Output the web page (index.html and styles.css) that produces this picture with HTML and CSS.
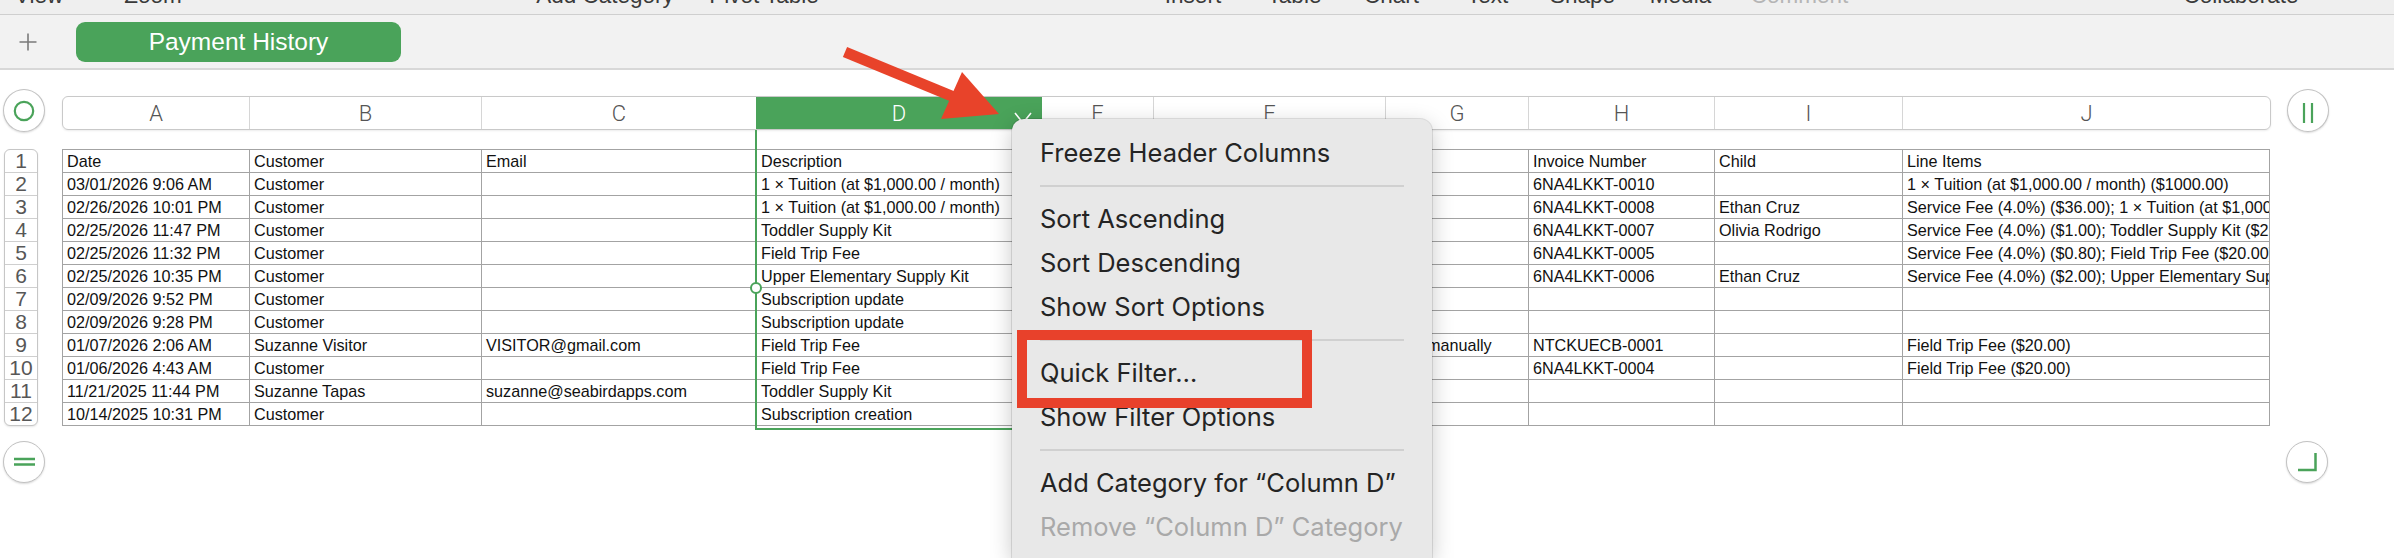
FILE: index.html
```html
<!DOCTYPE html>
<html>
<head>
<meta charset="utf-8">
<title>Payment History</title>
<link rel="stylesheet" href="styles.css">
</head>
<body>
<div class="toolbar">
  <span class="tl t1">View</span>
  <span class="tl t2">Zoom</span>
  <span class="tl t3">Add Category</span>
  <span class="tl t4">Pivot Table</span>
  <span class="tl t5">Insert</span>
  <span class="tl t6">Table</span>
  <span class="tl t7">Chart</span>
  <span class="tl t8">Text</span>
  <span class="tl t9">Shape</span>
  <span class="tl t10">Media</span>
  <span class="tl t11 dim">Comment</span>
  <span class="tl t12">Collaborate</span>
</div>

<div class="tabbar">
  <svg class="add-sheet" width="20" height="20" viewBox="0 0 20 20"><path d="M10 1.5V18.5M1.5 10H18.5" stroke="#7a7a7a" stroke-width="1.6" fill="none"/></svg>
  <div class="tab">Payment History</div>
</div>

<div class="sheet">
  <div class="colrow">
    <div class="round-btn">
      <svg width="42" height="42" viewBox="0 0 42 42"><circle cx="21" cy="21" r="9.2" stroke="#4aa35a" stroke-width="2.2" fill="none"/></svg>
    </div>
    <div class="colhead">
      <div class="ch">A</div>
      <div class="ch">B</div>
      <div class="ch">C</div>
      <div class="ch sel">D
        <svg class="chev" width="20" height="12" viewBox="0 0 20 12"><path d="M2 1L10 11L18 1" stroke="#fff" stroke-width="1.6" fill="none"/></svg>
      </div>
      <div class="ch">E</div>
      <div class="ch">F</div>
      <div class="ch">G</div>
      <div class="ch">H</div>
      <div class="ch">I</div>
      <div class="ch">J</div>
    </div>
    <div class="round-btn right">
      <svg width="42" height="42" viewBox="0 0 42 42"><path d="M17 13V33M25 13V33" stroke="#4aa35a" stroke-width="2.2" fill="none"/></svg>
    </div>
  </div>

  <div class="gridrow">
    <div class="rownums">
      <div class="rn">1</div><div class="rn">2</div><div class="rn">3</div><div class="rn">4</div>
      <div class="rn">5</div><div class="rn">6</div><div class="rn">7</div><div class="rn">8</div>
      <div class="rn">9</div><div class="rn">10</div><div class="rn">11</div><div class="rn">12</div>
    </div>
    <div class="table">
      <div class="c">Date</div><div class="c">Customer</div><div class="c">Email</div><div class="c">Description</div><div class="c"></div><div class="c"></div><div class="c"></div><div class="c">Invoice Number</div><div class="c">Child</div><div class="c">Line Items</div>

      <div class="c">03/01/2026 9:06 AM</div><div class="c">Customer</div><div class="c"></div><div class="c">1 × Tuition (at $1,000.00 / month)</div><div class="c"></div><div class="c"></div><div class="c"></div><div class="c">6NA4LKKT-0010</div><div class="c"></div><div class="c">1 × Tuition (at $1,000.00 / month) ($1000.00)</div>

      <div class="c">02/26/2026 10:01 PM</div><div class="c">Customer</div><div class="c"></div><div class="c">1 × Tuition (at $1,000.00 / month)</div><div class="c"></div><div class="c"></div><div class="c"></div><div class="c">6NA4LKKT-0008</div><div class="c">Ethan Cruz</div><div class="c">Service Fee (4.0%) ($36.00); 1 × Tuition (at $1,000.00 / month) ($1000.00)</div>

      <div class="c">02/25/2026 11:47 PM</div><div class="c">Customer</div><div class="c"></div><div class="c">Toddler Supply Kit</div><div class="c"></div><div class="c"></div><div class="c"></div><div class="c">6NA4LKKT-0007</div><div class="c">Olivia Rodrigo</div><div class="c">Service Fee (4.0%) ($1.00); Toddler Supply Kit ($25.00)</div>

      <div class="c">02/25/2026 11:32 PM</div><div class="c">Customer</div><div class="c"></div><div class="c">Field Trip Fee</div><div class="c"></div><div class="c"></div><div class="c"></div><div class="c">6NA4LKKT-0005</div><div class="c"></div><div class="c">Service Fee (4.0%) ($0.80); Field Trip Fee ($20.00)</div>

      <div class="c">02/25/2026 10:35 PM</div><div class="c">Customer</div><div class="c"></div><div class="c">Upper Elementary Supply Kit</div><div class="c"></div><div class="c"></div><div class="c"></div><div class="c">6NA4LKKT-0006</div><div class="c">Ethan Cruz</div><div class="c">Service Fee (4.0%) ($2.00); Upper Elementary Supply Kit ($50.00)</div>

      <div class="c">02/09/2026 9:52 PM</div><div class="c">Customer</div><div class="c"></div><div class="c">Subscription update</div><div class="c"></div><div class="c"></div><div class="c"></div><div class="c"></div><div class="c"></div><div class="c"></div>

      <div class="c">02/09/2026 9:28 PM</div><div class="c">Customer</div><div class="c"></div><div class="c">Subscription update</div><div class="c"></div><div class="c"></div><div class="c"></div><div class="c"></div><div class="c"></div><div class="c"></div>

      <div class="c">01/07/2026 2:06 AM</div><div class="c">Suzanne Visitor</div><div class="c">VISITOR@gmail.com</div><div class="c">Field Trip Fee</div><div class="c"></div><div class="c"></div><div class="c">Paid manually</div><div class="c">NTCKUECB-0001</div><div class="c"></div><div class="c">Field Trip Fee ($20.00)</div>

      <div class="c">01/06/2026 4:43 AM</div><div class="c">Customer</div><div class="c"></div><div class="c">Field Trip Fee</div><div class="c"></div><div class="c"></div><div class="c"></div><div class="c">6NA4LKKT-0004</div><div class="c"></div><div class="c">Field Trip Fee ($20.00)</div>

      <div class="c">11/21/2025 11:44 PM</div><div class="c">Suzanne Tapas</div><div class="c">suzanne@seabirdapps.com</div><div class="c">Toddler Supply Kit</div><div class="c"></div><div class="c"></div><div class="c"></div><div class="c"></div><div class="c"></div><div class="c"></div>

      <div class="c">10/14/2025 10:31 PM</div><div class="c">Customer</div><div class="c"></div><div class="c">Subscription creation</div><div class="c"></div><div class="c"></div><div class="c"></div><div class="c"></div><div class="c"></div><div class="c"></div>
    </div>
  </div>

  <div class="bottomrow">
    <div class="round-btn">
      <svg width="42" height="42" viewBox="0 0 42 42"><path d="M11 18H32M11 23.5H32" stroke="#4aa35a" stroke-width="2.5" fill="none"/></svg>
    </div>
    <div class="round-btn right">
      <svg width="42" height="42" viewBox="0 0 42 42"><path d="M12 29H29.5V12" stroke="#4aa35a" stroke-width="2.5" fill="none"/></svg>
    </div>
  </div>
</div>

<div class="selection"></div>
<div class="handle"></div>

<svg class="arrow" width="180" height="95" viewBox="0 0 180 95">
  <path d="M15 17L124 62" stroke="#e8432a" stroke-width="11" fill="none"/>
  <polygon points="132,37 111,84 169,79" fill="#e8432a"/>
</svg>

<div class="menu">
  <div class="mi">Freeze Header Columns</div>
  <div class="sep"></div>
  <div class="mi">Sort Ascending</div>
  <div class="mi">Sort Descending</div>
  <div class="mi">Show Sort Options</div>
  <div class="sep"></div>
  <div class="mi">Quick Filter…</div>
  <div class="mi">Show Filter Options</div>
  <div class="sep"></div>
  <div class="mi">Add Category for “Column D”</div>
  <div class="mi disabled">Remove “Column D” Category</div>
</div>

<div class="highlight"></div>
</body>
</html>
```

FILE: styles.css
```css
* { box-sizing: border-box; }
html, body { margin: 0; padding: 0; }
body {
  width: 2394px;
  height: 558px;
  overflow: hidden;
  position: relative;
  background: #ffffff;
  font-family: "Liberation Sans", Arial, sans-serif;
}

/* top toolbar (labels cut at top) */
.toolbar {
  height: 15px;
  background: #efefef;
  border-bottom: 1px solid #cfcfcf;
  display: flex;
  align-items: flex-start;
  overflow: hidden;
}
.tl {
  width: 0;
  flex-shrink: 0;
  display: flex;
  justify-content: center;
  white-space: nowrap;
  font-size: 22.5px;
  line-height: 26px;
  margin-top: -17px;
  color: #3a3a3a;
}
.tl.dim { color: #b5b5b5; }
.t1 { margin-left: 39px; }
.t2 { margin-left: 114px; }
.t3 { margin-left: 452px; }
.t4 { margin-left: 159px; }
.t5 { margin-left: 429px; }
.t6 { margin-left: 101.5px; }
.t7 { margin-left: 97px; }
.t8 { margin-left: 96px; }
.t9 { margin-left: 95px; }
.t10 { margin-left: 98px; }
.t11 { margin-left: 119px; }
.t12 { margin-left: 441.5px; }

/* sheet tabs */
.tabbar {
  height: 55px;
  background: #f2f2f2;
  border-bottom: 2px solid #d8d8d8;
  display: flex;
  align-items: center;
}
.add-sheet { margin-left: 18px; flex-shrink: 0; }
.tab {
  margin-left: 38px;
  width: 325px;
  height: 40px;
  border-radius: 9px;
  background: #4aa35a;
  color: #ffffff;
  font-size: 24.5px;
  display: flex;
  align-items: center;
  justify-content: center;
}

/* sheet */
.colrow {
  margin-top: 19px;
  display: flex;
  align-items: flex-start;
}
.round-btn {
  width: 42px;
  height: 43px;
  margin-left: 3px;
  border: 1.5px solid #c2c2c2;
  border-radius: 50%;
  background: #ffffff;
  box-shadow: 0 1px 2px rgba(0,0,0,0.15);
  display: flex;
  align-items: center;
  justify-content: center;
  flex-shrink: 0;
}
.round-btn svg { flex-shrink: 0; }
.colrow .round-btn.right { margin-left: 16px; }

.colhead {
  margin-left: 17px;
  margin-top: 7px;
  width: 2209px;
  height: 34px;
  border: 1px solid #c9c9c9;
  border-radius: 6px;
  box-shadow: 0 1px 2px rgba(0,0,0,0.08);
  display: grid;
  grid-template-columns: 187px 232px 275px 285px 112px 232px 143px 186px 188px 367px;
  overflow: hidden;
  flex-shrink: 0;
}
.ch {
  border-right: 1px solid #d6d6d6;
  display: flex;
  align-items: center;
  justify-content: center;
  font-family: Roboto, "Liberation Sans", sans-serif;
  font-weight: 300;
  font-size: 22px;
  color: #555555;
  position: relative;
}
.ch:last-child { border-right: none; }
.ch.sel {
  background: #4aa35a;
  color: #ffffff;
  border-right: none;
  margin-left: -1px;
}
.chev { position: absolute; left: 257px; top: 15px; }

.gridrow {
  margin-top: 17px;
  display: flex;
  align-items: flex-start;
}
.rownums {
  margin-left: 4px;
  width: 34px;
  border: 1px solid #c6c6c6;
  border-radius: 6px;
  background: #ffffff;
  box-shadow: 0 1px 2px rgba(0,0,0,0.1);
  flex-shrink: 0;
}
.rn {
  height: 23px;
  border-bottom: 1px solid #cfcfcf;
  font-size: 21px;
  color: #575757;
  display: flex;
  align-items: center;
  justify-content: center;
}
.rn:last-child { border-bottom: none; height: 22px; }

.table {
  margin-left: 24px;
  display: grid;
  grid-template-columns: 187px 232px 275px 285px 112px 232px 143px 186px 188px 367px;
  border-top: 1px solid #a3a3a3;
  border-left: 1px solid #a3a3a3;
  flex-shrink: 0;
}
.c {
  height: 23px;
  border-right: 1px solid #a3a3a3;
  border-bottom: 1px solid #a3a3a3;
  padding-left: 4px;
  font-size: 16.2px;
  line-height: 22px;
  color: #111111;
  white-space: nowrap;
  overflow: hidden;
}

.bottomrow {
  margin-top: 15px;
  display: flex;
  align-items: flex-start;
}
.bottomrow .round-btn { height: 42px; }
.bottomrow .round-btn.right { margin-left: 2241px; }

/* overlays */
.selection {
  position: absolute;
  left: 755px;
  top: 130px;
  width: 287px;
  height: 300px;
  border: 2px solid #4aa35a;
  border-top: none;
}
.handle {
  position: absolute;
  left: 750px;
  top: 282px;
  width: 12px;
  height: 12px;
  border: 2px solid #4aa35a;
  border-radius: 50%;
  background: #ffffff;
}
.arrow {
  position: absolute;
  left: 830px;
  top: 35px;
}

.menu {
  position: absolute;
  left: 1012px;
  top: 119px;
  width: 420px;
  height: 439px;
  padding-top: 12px;
  background: #e8e8e8;
  border-radius: 12px 12px 0 0;
  box-shadow: 0 0 0 1px rgba(0,0,0,0.10), 0 6px 22px rgba(0,0,0,0.22);
  font-family: Inter, "Liberation Sans", sans-serif;
}
.mi {
  height: 44px;
  line-height: 44px;
  padding-left: 28px;
  font-size: 25.5px;
  color: #242424;
  white-space: nowrap;
}
.mi.disabled { color: #a9a9a9; }
.sep {
  height: 2px;
  margin: 10px 28px;
  background: #d0d0d0;
}

.highlight {
  position: absolute;
  left: 1017px;
  top: 330px;
  width: 295px;
  height: 78px;
  border: 10px solid #e8412b;
}
```
